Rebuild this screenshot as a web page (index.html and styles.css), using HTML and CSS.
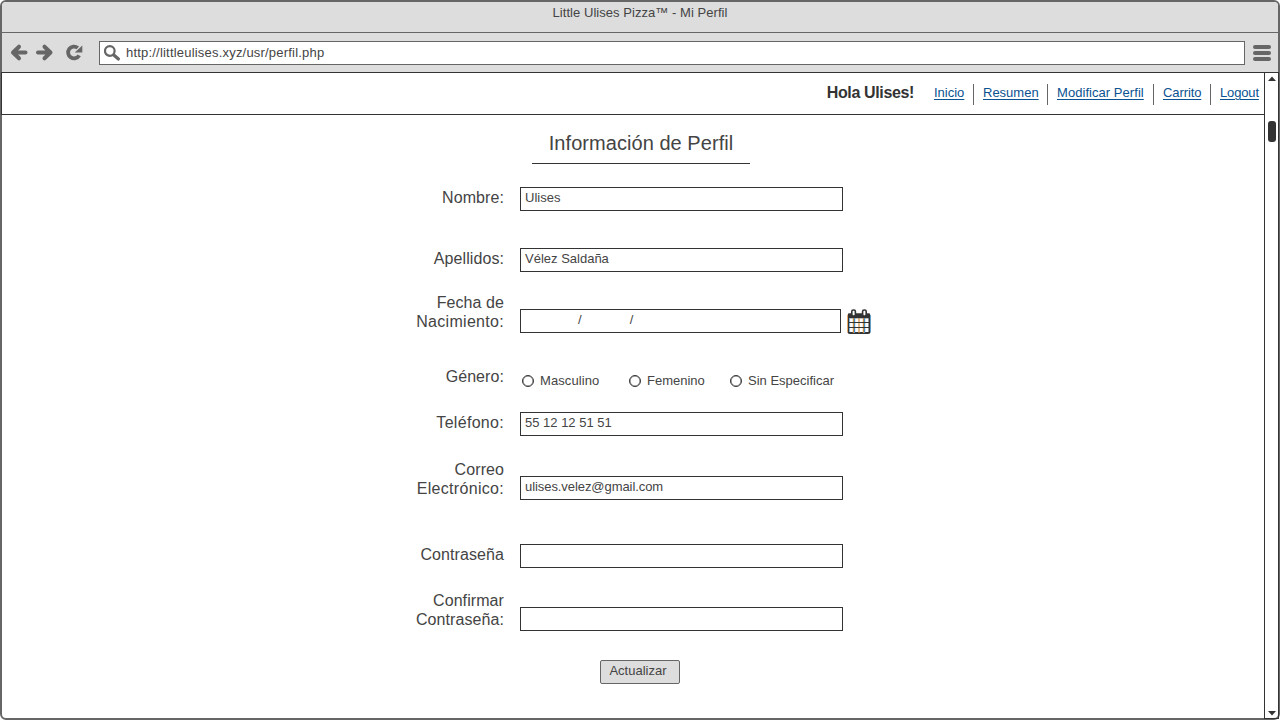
FILE: index.html
```html
<!DOCTYPE html>
<html lang="es">
<head>
<meta charset="utf-8">
<title>Little Ulises Pizza™ - Mi Perfil</title>
<link rel="stylesheet" href="styles.css">
</head>
<body>
<div class="window">
  <div class="titlebar"><span class="caption">Little Ulises Pizza™ - Mi Perfil</span></div>
  <div class="toolbar">
    <svg class="tools" width="80" height="20" viewBox="0 0 80 20" fill="none" stroke="#666" stroke-width="4">
      <path d="M15.500 9.500H4M9 3.700L3 9.500L9 15.300" stroke-linecap="round" stroke-linejoin="round"/>
      <path d="M28 9.500H39.500M34.500 3.700L40.500 9.500L34.500 15.300" stroke-linecap="round" stroke-linejoin="round"/>
      <path d="M67.800 4.900A5.900 5.900 0 1 0 69.200 12.300" stroke-width="3.800"/>
      <path d="M72.300 2.500V9.500H64.800Z" fill="#666" stroke="none"/>
    </svg>
    <div class="address">
      <svg width="18" height="18" viewBox="0 0 18 18" fill="none" stroke="#666">
        <circle cx="5.800" cy="6" r="4.800" stroke-width="2.200"/>
        <path d="M9.800 10L14.400 14" stroke-width="3.200" stroke-linecap="round"/>
      </svg>
      <span class="url">http://littleulises.xyz/usr/perfil.php</span>
    </div>
    <div class="menu"><i></i><i></i><i></i></div>
  </div>
  <div class="viewport">
    <main class="page">
      <header class="header">
        <strong class="hello">Hola Ulises!</strong>
        <nav class="nav">
          <a class="w-inicio" href="#">Inicio</a>
          <a class="w-resumen" href="#">Resumen</a>
          <a class="w-modificar" href="#">Modificar Perfil</a>
          <a class="w-carrito" href="#">Carrito</a>
          <a class="w-logout" href="#">Logout</a>
        </nav>
      </header>
      <h1 class="heading">Información de Perfil</h1>
      <form class="form">
        <div class="row"><label>Nombre:</label><div class="field">Ulises</div></div>
        <div class="row row-apellidos"><label>Apellidos:</label><div class="field">Vélez Saldaña</div></div>
        <div class="row row-fecha tall"><label>Fecha de<br><span class="wide">Nacimiento:</span></label>
          <div class="field date"><span>/</span><span>/</span></div>
          <svg class="calendar" width="24" height="26" viewBox="0 0 24 26">
            <rect x="1.500" y="5.500" width="21" height="18.500" rx="1.500" fill="#fff" stroke="#333" stroke-width="2"/>
            <path d="M1 4.500h22v4.800H1z" fill="#333"/>
            <path d="M7.500 9v15M17.500 9v15" stroke="#3f8fce" stroke-width="1.400"/>
            <path d="M12 9v15M6.400 9v15M16.400 9v15" stroke="#d08a3c" stroke-width="1.200"/>
            <path d="M2.600 9v14" stroke="#7db8e6" stroke-width="1"/>
            <path d="M2 13.500h20M2 18.500h20" stroke="#333"/>
            <path d="M.5 6v17.500" stroke="#e5a867"/>
            <path d="M23.500 6v17.500" stroke="#599fd0" stroke-width=".8"/>
            <rect x="4.800" y="1" width="3.600" height="6" rx="1.500" fill="#fff" stroke="#333" stroke-width="1.600"/>
            <rect x="15.600" y="1" width="3.600" height="6" rx="1.500" fill="#fff" stroke="#333" stroke-width="1.600"/>
          </svg>
        </div>
        <div class="row row-genero"><label>Género:</label>
          <div class="radios">
            <span class="radio r1"><i></i>Masculino</span>
            <span class="radio r2"><i></i>Femenino</span>
            <span class="radio r3"><i></i>Sin Especificar</span>
          </div>
        </div>
        <div class="row row-telefono"><label><span class="wide">Teléfono:</span></label><div class="field">55 12 12 51 51</div></div>
        <div class="row row-correo tall"><label>Correo<br><span class="wide">Electrónico:</span></label><div class="field email">ulises.velez@gmail.com</div></div>
        <div class="row row-clave"><label>Contraseña</label><div class="field"></div></div>
        <div class="row row-confirmar tall"><label>Confirmar<br>Contraseña:</label><div class="field"></div></div>
        <button class="submit" type="button">Actualizar</button>
      </form>
    </main>
    <aside class="scrollbar">
      <svg width="8" height="5" viewBox="0 0 8 5"><path d="M0 5L4 .5L8 5Z" fill="#333"/></svg>
      <span class="thumb"></span>
      <svg class="down" width="8" height="5" viewBox="0 0 8 5"><path d="M0 0H8L4 4.500Z" fill="#333"/></svg>
    </aside>
  </div>
</div>
</body>
</html>
```
FILE: styles.css
```css
* { box-sizing: border-box; }
body {
  margin: 0;
  background: #fff;
  font: 13px/16px "Liberation Sans", Arial, sans-serif;
  color: #444;
}
.window {
  width: 1280px;
  height: 720px;
  border: 2px solid #666;
  border-radius: 6px;
  display: flex;
  flex-direction: column;
}
.titlebar {
  height: 31px;
  background: #ddd;
  border-bottom: 1px solid #666;
  border-radius: 4px 4px 0 0;
  text-align: center;
  padding-top: 3px;
}
.caption { letter-spacing: .05px; }
.toolbar {
  height: 39px;
  background: #ddd;
  display: flex;
  align-items: flex-start;
}
.tools { margin: 10px 0 0 8px; }
.address {
  width: 1146px;
  height: 24px;
  margin: 8px 0 0 9px;
  border: 1px solid #666;
  background: #fff;
  display: flex;
  padding: 3px 0 0 4px;
  gap: 4px;
}
.url { letter-spacing: .2px; }
.menu {
  display: grid;
  gap: 2px;
  margin: 12px 0 0 8px;
}
.menu i {
  width: 18px;
  height: 4px;
  border-radius: 2px;
  background: #666;
}
.viewport {
  flex: 1;
  display: flex;
  margin-right: -1px;
  margin-bottom: -1px;
}
.page { width: 1262px; }
.header {
  height: 43px;
  margin-left: -1px;
  border: 1px solid #333;
  border-right: 0;
  display: flex;
  justify-content: flex-end;
  padding-right: 5px;
}
.hello {
  color: #333;
  font-size: 16px;
  line-height: 18px;
  letter-spacing: -.36px;
  margin: 11px 20px 0 0;
}
.nav {
  display: flex;
  padding-top: 11px;
  height: 32px;
}
.nav a {
  color: #0a5291;
  line-height: 18px;
  text-underline-offset: 2px;
  text-decoration-thickness: 1px;
  white-space: nowrap;
}
.nav a + a {
  border-left: 1px solid #666;
  margin-left: 9px;
  padding-left: 9px;
}
.nav .w-inicio { width: 30px; }
.nav .w-resumen { width: 65px; }
.nav .w-modificar { width: 97px; letter-spacing: .05px; }
.nav .w-carrito { width: 48px; letter-spacing: -.1px; }
.nav .w-logout { width: 49px; letter-spacing: -.15px; }
.heading {
  width: 218px;
  height: 49px;
  margin: 0 0 0 530px;
  border-bottom: 1px solid #333;
  padding-top: 16px;
  text-align: center;
  font-size: 20px;
  font-weight: normal;
  line-height: 24px;
  letter-spacing: .05px;
}
.form {
  margin-left: 402px;
  padding-top: 23px;
}
.row {
  height: 24px;
  display: flex;
  align-items: flex-end;
}
.row label {
  width: 100px;
  margin-right: 16px;
  padding-bottom: 4px;
  text-align: right;
  font-size: 16px;
  line-height: 19px;
  letter-spacing: .08px;
}
.row .wide { letter-spacing: .3px; }
.tall { height: 40px; }
.row.tall label { padding-bottom: 2px; }
.field {
  width: 323px;
  height: 24px;
  border: 1px solid #333;
  padding: 2px 4px;
}
.email { letter-spacing: -.07px; }
.row-apellidos { margin-top: 37px; }
.row-fecha { margin-top: 21px; }
.row-genero { margin-top: 33px; }
.row-telefono { margin-top: 22px; }
.row-correo { margin-top: 24px; }
.row-clave { margin-top: 44px; }
.row-confirmar { margin-top: 23px; }
.date {
  width: 321px;
  padding-left: 57px;
  display: flex;
  gap: 48px;
}
.calendar { margin: 0 0 -2px 6px; }
.radios {
  display: flex;
  letter-spacing: .08px;
  margin-bottom: 1px;
}
.radio {
  display: flex;
  align-items: center;
  gap: 6px;
  padding-left: 2px;
}
.radio i {
  width: 12px;
  height: 12px;
  border: 1px solid #333;
  box-shadow: inset 0 0 0 .5px #666;
  border-radius: 50%;
}
.r1 { width: 107px; }
.r2 { width: 101px; }
.r2, .r3 { letter-spacing: 0; }
.submit {
  display: block;
  width: 80px;
  height: 24px;
  margin: 29px 0 0 196px;
  border: 1px solid #666;
  border-radius: 2px;
  background: #ddd;
  color: #444;
  font: inherit;
  padding: 0 4px 3px 0;
}
.scrollbar {
  width: 15px;
  border: 1px solid #333;
  display: flex;
  flex-direction: column;
  align-items: center;
  padding: 3px 0 2px;
}
.thumb {
  width: 8px;
  height: 21px;
  margin-top: 40px;
  border-radius: 3px;
  background: #333;
}
.down { margin-top: auto; }
```
